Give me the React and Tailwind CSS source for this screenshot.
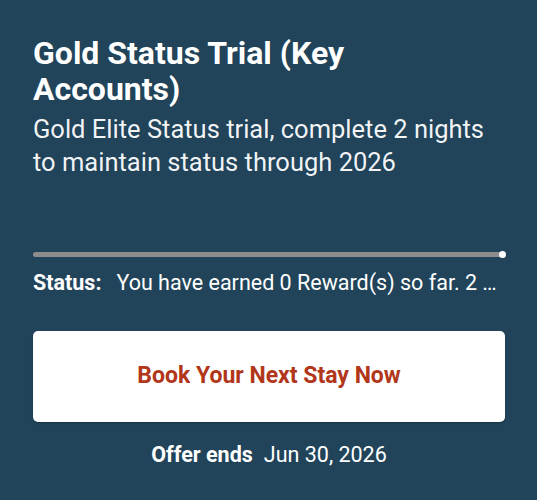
import React from 'react';

export default function App() {
  return (
    <div
      className="min-h-[500px] w-full bg-[#21445a] text-white"
      style={{ fontFamily: 'Roboto, "Noto Sans", sans-serif' }}
    >
      <div className="pl-[33px] pr-[32px] pt-[35px]">
        {/* Title + description */}
        <h1 className="max-w-[440px] text-[32px] font-bold leading-[36px]">
          Gold Status Trial (Key Accounts)
        </h1>
        <p className="mt-[6px] text-[25.5px] leading-[33px] text-white/95">
          Gold Elite Status trial, complete 2 nights to maintain status through 2026
        </p>

        {/* Progress */}
        <div className="mt-[73px] flex h-[5px] items-center rounded-full bg-[#8c8c8c]">
          <div className="ml-auto -mr-[1px] h-[7px] w-[7px] rounded-full bg-white" />
        </div>

        <div className="mt-[13px] flex items-center text-[21.5px] leading-[26px]">
          <span className="shrink-0 font-bold">Status:</span>
          <span className="ml-[15px] truncate pr-[4px]">
            You have earned 0 Reward(s) so far. 2 more night(s) to go.
          </span>
        </div>

        {/* Action */}
        <button className="mt-[35px] flex h-[91px] w-full items-center justify-center rounded-[5px] bg-white text-[23px] font-bold text-[#b1361a] shadow-[0_1px_2px_rgba(0,0,0,0.3)]">
          Book Your Next Stay Now
        </button>

        <div className="mt-[20px] flex justify-center gap-[11px] text-[21.5px] leading-[26px]">
          <span className="font-bold">Offer ends</span>
          <span>Jun 30, 2026</span>
        </div>
      </div>
    </div>
  );
}
